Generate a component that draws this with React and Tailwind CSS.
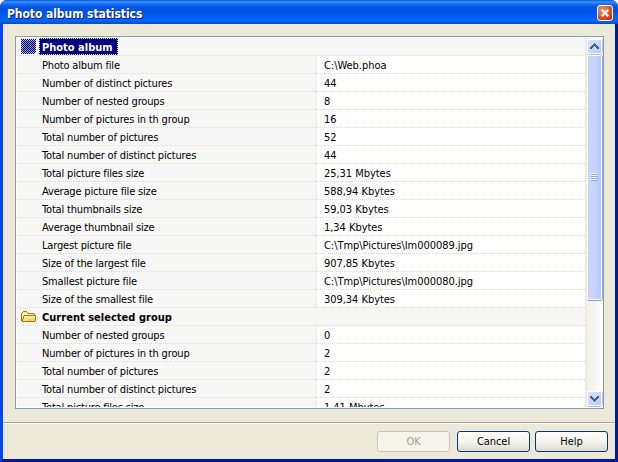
import React from "react";

const album = [
  ["Photo album file", "C:\\Web.phoa"],
  ["Number of distinct pictures", "44"],
  ["Number of nested groups", "8"],
  ["Number of pictures in th group", "16"],
  ["Total number of pictures", "52"],
  ["Total number of distinct pictures", "44"],
  ["Total picture files size", "25,31 Mbytes"],
  ["Average picture file size", "588,94 Kbytes"],
  ["Total thumbnails size", "59,03 Kbytes"],
  ["Average thumbnail size", "1,34 Kbytes"],
  ["Largest picture file", "C:\\Tmp\\Pictures\\Im000089.jpg"],
  ["Size of the largest file", "907,85 Kbytes"],
  ["Smallest picture file", "C:\\Tmp\\Pictures\\Im000080.jpg"],
  ["Size of the smallest file", "309,34 Kbytes"],
];

const group = [
  ["Number of nested groups", "0"],
  ["Number of pictures in th group", "2"],
  ["Total number of pictures", "2"],
  ["Total number of distinct pictures", "2"],
  ["Total picture files size", "1,41 Mbytes"],
];

const dotsX = "bg-[repeating-linear-gradient(90deg,#e2dec8_0_1px,transparent_1px_2px)]";
const dotsY = "bg-[repeating-linear-gradient(180deg,#e2dec8_0_1px,transparent_1px_2px)]";

function Row({ label, value }) {
  return (
    <div className="h-[18px] shrink-0 flex flex-col">
      <div className="h-[17px] flex">
        <div className="w-[299px] bg-[#f7f7f7] pl-[25px] leading-[19px]">{label}</div>
        <div className={`w-px ${dotsY}`} />
        <div className="flex-1 bg-white pl-[7px] leading-[19px] tracking-[-0.04px]">{value}</div>
        <div className={`w-px ${dotsY}`} />
      </div>
      <div className="h-px flex">
        <div className="w-[299px] bg-[#f7f7f7]">
          <div className={`h-px ${dotsX}`} />
        </div>
        <div className={`flex-1 ${dotsX}`} />
      </div>
    </div>
  );
}

function Header({ icon, children }) {
  return (
    <div className="h-[18px] shrink-0 flex flex-col bg-[#f7f7f7]">
      <div className="h-[17px] flex">
        <div className="w-[22px] pl-1 pt-px">{icon}</div>
        <div className="flex-1 flex">{children}</div>
        <div className={`w-px ${dotsY}`} />
      </div>
      <div className={`h-px ${dotsX}`} />
    </div>
  );
}

function AlbumIcon() {
  return (
    <svg width="16" height="16" viewBox="0 0 16 16" shapeRendering="crispEdges">
      <defs>
        <pattern id="check" width="2" height="2" patternUnits="userSpaceOnUse">
          <path d="M0 0h1v1H0zM1 1h1v1H1z" fill="#000080" />
        </pattern>
      </defs>
      <path d="M0 0h15v15H0z" fill="#c4cbe6" />
      <path d="M2 2h12v11H2z" fill="#7294d0" />
      <path d="M3 7h3v3H3zM6 8h2v2H6z" fill="#20d080" />
      <path d="M5 5h3v3H5z" fill="#f05050" />
      <path d="M10 5h3v5h-3z" fill="#f05060" />
      <path d="M8 6h2v3H8z" fill="#30c8f0" />
      <path d="M0 0h15v15H0z" fill="url(#check)" />
      <path d="M14 14h2v1h-2z" fill="#ffffff" />
    </svg>
  );
}

function FolderIcon() {
  return (
    <svg width="16" height="16" viewBox="0 0 16 16" shapeRendering="crispEdges">
      <path d="M1 3h1V2h4v1h1v1h6v2h2v2l-1 5H1z" fill="#ffe9a0" />
      <path d="M2 2h4v1H2zM1 3h1v1H1zM6 3h1v1H6zM7 4h6v1H7zM0 4h1v8H0zM13 5h1v1h-1zM1 12h13v1H1zM3 6h12v1H3zM2 7h1v3H2zM1 10h1v2H1zM14 7h1v5h-1z" fill="#a87818" />
      <path d="M3 7h11v5H2v-2h1z" fill="#ffe483" />
      <path d="M3 7h11v1H3z" fill="#fff8cf" />
      <path d="M7 10h7v2H5v-1h2z" fill="#ffc94e" />
    </svg>
  );
}

function ArrowButton({ down }) {
  return (
    <div className="w-[15px] h-[15px] shrink-0 rounded-[2px] border border-white bg-gradient-to-br from-[#dce6ff] to-[#b5c9f8] shadow-[0_1px_0_#a9bce4,1px_0_0_#c0cdea]">
      <svg width="13" height="13" viewBox="0 0 13 13" shapeRendering="crispEdges">
        <path
          d={down
            ? "M2 4h2v1h1v1h1v1h1V6h1V5h1V4h2v2h-1v1H9v1H8v1H7v1H6V9H5V8H4V7H3V6H2z"
            : "M6 3h1v1h1v1h1v1h1v1h1v2H9V8H8V7H7V6H6v1H5v1H4v1H2V7h1V6h1V5h1V4h1z"}
          fill="#4d6185"
        />
      </svg>
    </div>
  );
}

function Button({ children, disabled }) {
  return (
    <div
      className={`w-[73px] h-[21px] rounded-[3px] border flex items-center justify-center pt-px tracking-[-0.05px] ${
        disabled
          ? "border-[#c9c7ba] bg-[#f5f4ea] text-[#a1a192]"
          : "border-[#003c74] bg-gradient-to-b from-white via-[#f4f3ee] to-[#dedace] text-black"
      }`}
    >
      {children}
    </div>
  );
}

export default function App() {
  return (
    <div className="w-[618px] h-[462px] overflow-hidden bg-white select-none">
      <div className="w-full h-full flex flex-col rounded-t-[7px] overflow-hidden bg-[#0831d9] font-['DejaVu_Sans_Condensed','DejaVu_Sans',sans-serif] text-[11px] tracking-[-0.17px] text-black whitespace-nowrap">
        <div className="h-6 shrink-0 flex items-start justify-between pl-[7px] pr-[5px] pt-[5px] bg-[linear-gradient(180deg,#0758dc_0px,#3d92ff_2px,#1570f5_4px,#0054e3_7px,#0055e5_13px,#0362fa_19px,#0264fc_21px,#004bd2_24px)]">
          <div className="text-[12px] leading-[18px] font-bold tracking-[-0.06px] text-white [text-shadow:1px_1px_0_#0b1f7a]">Photo album statistics</div>
          <div className="w-4 h-4 rounded-[3px] border border-white bg-[radial-gradient(circle_at_30%_25%,#f0906c,#df4a1f_60%,#b83008)]">
            <svg width="14" height="14" viewBox="0 0 14 14">
              <path d="M3.7 3.7l6.6 6.6M10.3 3.7l-6.6 6.6" stroke="white" strokeWidth="2.2" />
            </svg>
          </div>
        </div>
        <div className="flex-1 flex flex-col border-x-[3px] border-b-[3px] border-l-[#0a45e5] border-r-[#0019a0] border-b-[#0019a0]">
          <div className="h-[398px] shrink-0 bg-[#ece9d8] pt-3 px-3">
            <div className="w-[589px] h-[373px] flex bg-white border border-[#7f9db9] p-px overflow-hidden">
              <div className="w-[569px] shrink-0 flex flex-col overflow-hidden">
                <Header icon={<AlbumIcon />}>
                  <div className="w-[79px] h-[17px] border border-dotted border-[#e8e89c] bg-[#000080] text-white font-bold pl-[2px] leading-[17px] tracking-[0px]">Photo album</div>
                </Header>
                {album.map(([l, v], i) => <Row key={i} label={l} value={v} />)}
                <Header icon={<FolderIcon />}>
                  <div className="pl-[3px] leading-[19px] font-bold tracking-[0.02px]">Current selected group</div>
                </Header>
                {group.map(([l, v], i) => <Row key={i} label={l} value={v} />)}
              </div>
              <div className="w-4 shrink-0 flex flex-col items-center pt-px bg-gradient-to-r from-[#f0efe8] to-[#fefefb] border-l border-[#eeede5]">
                <ArrowButton />
                <div className="w-[15px] h-[245px] mt-px shrink-0 rounded-[2px] border border-white bg-gradient-to-r from-[#c9d7fd] via-[#c3d3fd] to-[#b5c8fa] shadow-[0_1px_0_#829fc9,1px_0_0_#98b0d5] flex flex-col items-center justify-center gap-px">
                  {[0, 1, 2, 3].map((i) => (
                    <div key={i} className="w-[7px] h-px bg-[#8cb0f8] shadow-[-1px_-1px_0_#eef4fe]" />
                  ))}
                </div>
                <div className="flex-1" />
                <ArrowButton down />
                <div className="h-px shrink-0" />
              </div>
            </div>
          </div>
          <div className="flex-1 bg-[#ece9d8] border-t border-[#aca899]">
            <div className="h-full flex border-t border-white justify-end pt-[7px] pr-[7px]">
              <Button disabled>OK</Button>
              <div className="w-[7px]" />
              <Button>Cancel</Button>
              <div className="w-[5px]" />
              <Button>Help</Button>
            </div>
          </div>
        </div>
      </div>
    </div>
  );
}
